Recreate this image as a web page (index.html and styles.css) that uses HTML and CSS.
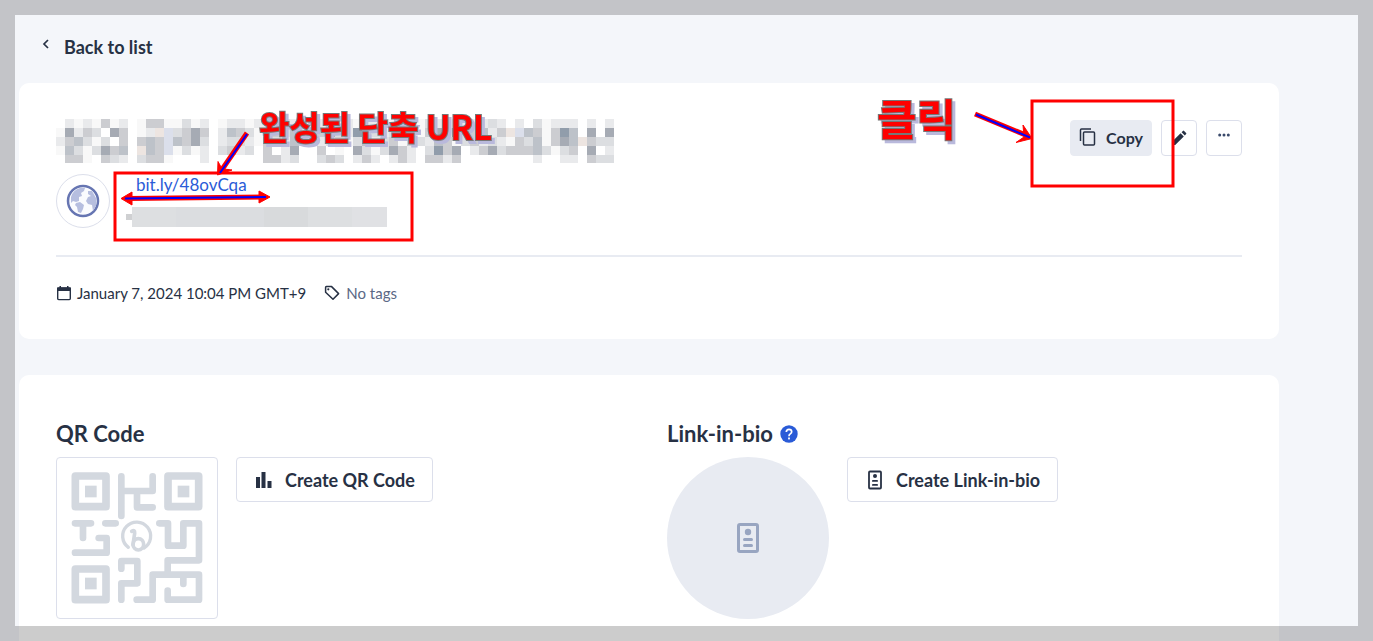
FILE: index.html
```html
<!DOCTYPE html>
<html lang="en">
<head>
<meta charset="utf-8">
<title>Link details</title>
<link rel="stylesheet" href="styles.css">
</head>
<body>
<div class="page">
  <a class="back" href="#">
    <svg class="back-icon" width="8" height="12" viewBox="0 0 8 12" aria-hidden="true"><path d="M6 2 2 6l4 4" fill="none" stroke="#273144" stroke-width="1.7"/></svg>
    <span>Back to list</span>
  </a>

  <main class="cards">
    <section class="card link-card">
      <header class="link-head">
        <canvas class="mosaic" id="title-mosaic" width="558" height="44" role="img" aria-label="Hidden title"></canvas>
        <div class="actions">
          <button class="btn btn-copy" type="button">
            <svg width="18" height="18" viewBox="0 0 18 18" aria-hidden="true" fill="none" stroke="#273144" stroke-width="1.5"><rect x="4.500" y="4" width="11" height="13" rx="1"/><path d="M1.500 13V2q0-1 1-1H12"/></svg>
            <span>Copy</span>
          </button>
          <button class="btn btn-square" type="button" aria-label="Edit">
            <svg width="16" height="16" viewBox="0 0 16 16" aria-hidden="true" fill="#273144"><path d="M1 15v-3.200L9.600 3.200l3.200 3.200L4.200 15zM10.600 2.200l1.300-1.300q.6-.6 1.200 0l2 2q.6.600 0 1.200l-1.300 1.300z"/></svg>
          </button>
          <button class="btn btn-square" type="button" aria-label="More">
            <svg class="dots" width="12" height="4" viewBox="0 0 12 4" aria-hidden="true" fill="#3a4a6b"><circle cx="1.700" cy="2" r="1.500"/><circle cx="6" cy="2" r="1.500"/><circle cx="10.300" cy="2" r="1.500"/></svg>
          </button>
        </div>
      </header>

      <div class="link-row">
        <div class="site-icon">
          <svg width="34" height="34" viewBox="0 0 34 34" aria-hidden="true"><circle cx="17" cy="17" r="15" fill="#fafbfe" stroke="#6675b2" stroke-width="2.500"/><path d="M5 13q2-7 9-9l5 0-1 3-3 2 1 3-3 1 0 4-3 1-3-1-2 2zM10 19l4-1 4 3-1 4-2 4-3-1-1-5-2-2zM22 7l4 0 4 7 0 8-3 5-1-6-4-1-2-3 2-4 3-1-3-2z" fill="#b6bedf"/></svg>
        </div>
        <div class="link-urls">
          <a class="short-url" href="#">bit.ly/48ovCqa</a>
          <div class="long-url"><i class="blk-tip"></i><i class="blk"></i></div>
        </div>
      </div>

      <div class="meta">
        <span class="meta-item">
          <svg width="16" height="16" viewBox="0 0 16 16" aria-hidden="true"><rect x="1.700" y="3" width="12.600" height="11.600" rx="1" fill="none" stroke="#273144" stroke-width="1.400"/><path d="M1 2.600h14V6H1zM3.500 1H5v2H3.500zM11 1h1.500v2H11z" fill="#273144"/></svg>
          <span>January 7, 2024 10:04 PM GMT+9</span>
        </span>
        <span class="meta-item meta-tags">
          <svg width="16" height="16" viewBox="0 0 16 16" aria-hidden="true"><path d="M1.600 2.400q0-.8.8-.8h5.200L14.600 8.600 9 14.300 1.600 7.200z" fill="none" stroke="#273144" stroke-width="1.500" stroke-linejoin="round"/><circle cx="4.300" cy="4.300" r="1.100" fill="#273144"/></svg>
          <span>No tags</span>
        </span>
      </div>

      <svg class="note note-url" width="420" height="150" viewBox="100 100 420 150">
        <rect class="note-box" x="115" y="173" width="297" height="67"/>
        <path class="arrow-edge" d="M247 133 221 171"/>
        <path class="arrow-head" d="M217.500 175 218 161.500l3 5.500 3 2 8 1z"/>
        <path class="arrow-core" d="M247 134 220 173"/>
        <path class="arrow-edge" d="M128 198.500 264 197"/>
        <path class="arrow-head" d="M121 198.500 132 192v13zM270 197l-11-6v12z"/>
        <path class="arrow-core" d="M125 198.500 266 197"/>
        <text class="note-text" x="259" y="140">완성된 단축 URL</text>
      </svg>
      <svg class="note note-click" width="330" height="115" viewBox="860 85 330 115">
        <rect class="note-box" x="1032" y="101" width="141" height="85"/>
        <path class="arrow-edge" d="M975 114 1028 136"/>
        <path class="arrow-head" d="M1032 138.500 1016 142.500l8-5.500-1-12z"/>
        <path class="arrow-core" d="M976 114.500 1030 137.500"/>
        <text class="note-text note-text-lg" x="877" y="136">클릭</text>
      </svg>
    </section>

    <section class="card tools">
      <div class="tool">
        <h2 class="tool-title">QR Code</h2>
        <div class="tool-body">
          <div class="qr">
            <svg viewBox="21 24 480 480" width="160" height="160" aria-hidden="true" fill="none" stroke="#d3d8df" stroke-width="20" stroke-linecap="round" stroke-linejoin="round">
              <g stroke-width="23"><rect x="76" y="78" width="92" height="92"/><rect x="354" y="78" width="92" height="92"/><rect x="76" y="357" width="92" height="92"/></g>
              <g fill="#d3d8df" stroke="none"><rect x="105" y="107" width="35" height="35"/><rect x="383" y="107" width="35" height="35"/><rect x="105" y="383" width="35" height="35"/></g>
              <path d="M214 79V198M214 123H308V79M261 123V172H308M75 220H123M99 220V264M166 220H197M146 264H170V308H75"/>
              <path d="M328 220H354V287H400V220H447V331H353V374M260 449H308V374H447V449H353V422M400 374V402M214 356V333H262V400H214V449"/>
              <path stroke-width="10" d="M235 292A42 42 0 1 1 282 294"/>
              <path stroke-width="11" d="M245 244Q255 238 254 250L249 284"/>
              <ellipse stroke-width="11" cx="265" cy="283" rx="16" ry="17"/>
            </svg>
          </div>
          <button class="btn btn-create" type="button">
            <svg width="18" height="18" viewBox="0 0 18 18" aria-hidden="true" fill="#273144"><path d="M1 6h4v11H1zM6.500 1h4v16h-4zM12.500 10h4v7h-4z"/></svg>
            <span>Create QR Code</span>
          </button>
        </div>
      </div>
      <div class="tool">
        <h2 class="tool-title">Link-in-bio
          <svg width="18" height="18" viewBox="0 0 18 18" aria-hidden="true"><circle cx="9" cy="9" r="8.700" fill="#2a5bd7"/><path d="M6.300 7Q6.400 4.300 9 4.300t2.700 2.400q0 1.300-1.400 2.200T9 11.200" fill="none" stroke="#fff" stroke-width="1.700"/><rect x="8.100" y="12.500" width="1.800" height="1.900" fill="#fff"/></svg>
        </h2>
        <div class="tool-body">
          <div class="bio">
            <svg width="22" height="30" viewBox="0 0 22 30" aria-hidden="true" fill="#98a5c1"><rect x="1.500" y="1.500" width="19" height="27" rx="1.500" fill="none" stroke="#98a5c1" stroke-width="3"/><circle cx="11" cy="9" r="3.200"/><rect x="6" y="15" width="10" height="3" rx="1.500"/><rect x="6" y="21" width="10" height="3" rx="1.500"/></svg>
          </div>
          <button class="btn btn-create" type="button">
            <svg width="18" height="20" viewBox="0 0 18 20" aria-hidden="true" fill="#273144"><rect x="3" y="1.500" width="12" height="17" rx="1" fill="none" stroke="#273144" stroke-width="1.800"/><circle cx="9" cy="6" r="2"/><rect x="6" y="10" width="6" height="1.800" rx=".9"/><rect x="6" y="14" width="6" height="1.800" rx=".9"/></svg>
            <span>Create Link-in-bio</span>
          </button>
        </div>
      </div>
    </section>
  </main>
</div>
<div class="frame" aria-hidden="true"></div>
<script src="mosaic.js"></script>
</body>
</html>
```
FILE: styles.css
```css
* {
  box-sizing: border-box;
}

body {
  margin: 0;
  background: #f4f6fa;
  color: #273144;
  font-family: Lato, "Liberation Sans", "Noto Sans CJK KR", sans-serif;
}

.page {
  display: flex;
  flex-direction: column;
  min-height: 100vh;
  padding: 0 19px;
}

/* translucent border over the whole window */
.frame {
  position: fixed;
  inset: 0;
  border: 15px solid rgba(0, 0, 0, 0.2);
  pointer-events: none;
}

.back {
  display: flex;
  align-items: flex-start;
  gap: 14px;
  align-self: flex-start;
  padding: 36px 23px 25px;
  color: inherit;
  font-size: 18px;
  font-weight: 700;
  line-height: 22px;
  text-decoration: none;
}

.back-icon {
  margin-top: 2px;
}

.cards {
  display: flex;
  flex: 1;
  flex-direction: column;
  gap: 36px;
  max-width: 1260px;
}

.card {
  padding: 36px 37px;
  background: #fff;
  border-radius: 10px;
}

.link-card {
  position: relative;
}

.link-head {
  display: flex;
  align-items: flex-start;
  justify-content: space-between;
}

.mosaic {
  display: block;
}

.actions {
  display: flex;
  gap: 9px;
  padding-top: 1px;
}

.btn {
  display: flex;
  align-items: center;
  justify-content: center;
  padding: 0;
  border: 1px solid #dcdfeb;
  border-radius: 4px;
  background: #fff;
  color: inherit;
  font: inherit;
  font-weight: 700;
}

.btn-copy {
  gap: 9px;
  height: 36px;
  padding: 0 8px 2px;
  border-color: #e8ebf2;
  background: #e8ebf2;
  font-size: 16px;
}

.btn-square {
  width: 36px;
  height: 36px;
}

.dots {
  margin-bottom: 6px;
}

.link-row {
  display: flex;
  gap: 16px;
  padding: 11px 0 27px;
  border-bottom: 2px solid #e8ebf2;
}

.site-icon {
  display: flex;
  align-items: center;
  justify-content: center;
  width: 54px;
  height: 54px;
  border: 1px solid #dcdfeb;
  border-radius: 50%;
}

.short-url {
  display: block;
  margin-left: 10px;
  color: #2a5bd7;
  font-size: 17px;
  line-height: 22px;
  text-decoration: none;
}

.long-url {
  display: flex;
  align-items: center;
  margin-top: 11px;
}

.blk-tip {
  width: 6px;
  height: 6px;
  background: #cfd0d2;
}

.blk {
  width: 255px;
  height: 20px;
  background: linear-gradient(90deg, #dddfe1 0 44px, #dbdde0 44px 132px, #d8dadc 132px 176px, #dddfe1 176px 220px, #e0e1e4 220px);
}

.meta {
  display: flex;
  gap: 18px;
  padding-top: 26px;
  font-size: 15px;
  line-height: 20px;
}

.meta-item {
  display: flex;
  align-items: center;
  gap: 5px;
}

.meta-tags {
  gap: 6px;
  color: #5b6885;
}

.note {
  position: absolute;
  pointer-events: none;
}

.note-url {
  top: 17px;
  left: 81px;
}

.note-click {
  top: 2px;
  right: 89px;
}

.note-box {
  fill: none;
  stroke: #f00;
  stroke-width: 3px;
}

.arrow-edge {
  stroke: #f00;
  stroke-width: 5px;
}

.arrow-head {
  fill: #f00;
  stroke: #f00;
}

.arrow-core {
  stroke: #00f;
  stroke-width: 2px;
}

.note-text {
  fill: #f00;
  stroke: #777;
  stroke-width: 2px;
  paint-order: stroke;
  font-family: "Noto Sans CJK KR", sans-serif;
  font-size: 33px;
  font-weight: 700;
  filter: drop-shadow(3px 3px 0 #b9b9dc);
}

.note-text-lg {
  font-size: 43px;
}

.tools {
  display: grid;
  flex: 1;
  grid-template-columns: 1fr 1fr;
  gap: 36px;
  padding: 47px 37px 22px;
  border-radius: 10px 10px 0 0;
}

.tool-title {
  display: flex;
  align-items: center;
  gap: 7px;
  margin: 0 0 11px;
  font-size: 22px;
  font-weight: 700;
  line-height: 24px;
}

.tool-body {
  display: flex;
  align-items: flex-start;
  gap: 18px;
}

.qr {
  width: 162px;
  height: 162px;
  border: 1px solid #dcdfeb;
  border-radius: 4px;
}

.qr svg {
  display: block;
}

.bio {
  display: flex;
  align-items: center;
  justify-content: center;
  width: 162px;
  height: 162px;
  border-radius: 50%;
  background: #e8ebf2;
}

.btn-create {
  gap: 12px;
  height: 45px;
  padding: 0 17px 0 18px;
  font-size: 18px;
}
```
FILE: mosaic.js
```js
// Draws the hidden title as rows of 9px blocks, one letter per shade.
const shades = {
  a: "#f8f8f8", b: "#e9eaec", c: "#dcdee1", d: "#cccdd1", e: "#bdc2c9",
  f: "#a6abb4", k: "#919dab", p: "#ede5e1", l: "#dbdfeb"
};
const rows = [
  ".babadab.addaacab.abbabbacbbabcbbabbcabbacbabbbbcb.b.cabbb.b.b",
  "afbdc.fd.abplcdfd.bedcabdcebadfcbkdcbcedadfckcdebdpledadke.f.f",
  "bdecac.d.dedledfc.bccbadcbedabcdacebcdadcbedacdbcbadceadfepdcc",
  "aecacfde.pedlacab.cdbc.d.bf..d.a.fcacfdb.ckdf.bdfcdddecacd.f.b",
  ".dda.dcb.cdda...b......ddbc..cdc.bdb.bdb.ddbd........b..bb.dcc"
];
const ctx = document.getElementById("title-mosaic").getContext("2d");
rows.forEach((row, y) => {
  [...row].forEach((key, x) => {
    if (!shades[key]) return;
    ctx.fillStyle = shades[key];
    ctx.fillRect(x * 9, y * 9, 9, 9);
  });
});
```
